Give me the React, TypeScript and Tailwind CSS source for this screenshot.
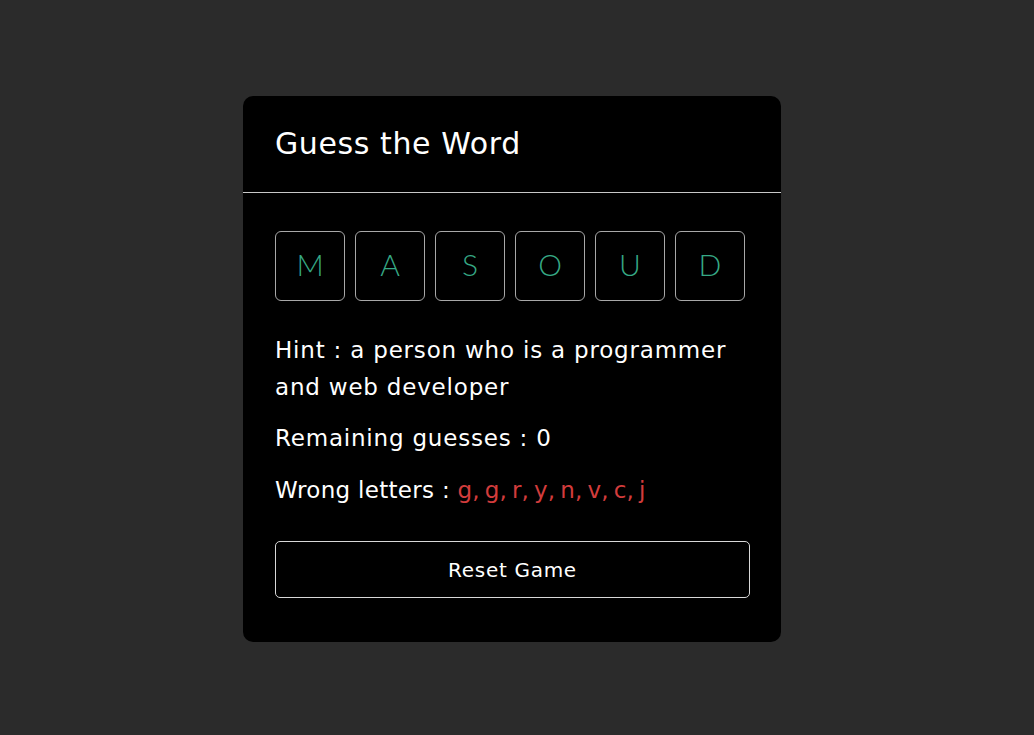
import React from "react";

const letters = ["M", "A", "S", "O", "U", "D"];
const wrong = ["g", "g", "r", "y", "n", "v", "c", "j"];

export default function App() {
  return (
    <div
      className="min-h-screen w-full bg-[#2b2b2b] flex items-center justify-center pr-[10px]"
      style={{ fontFamily: "'DejaVu Sans', 'Noto Sans', sans-serif" }}
    >
      <div className="w-[538px] bg-black rounded-[10px] text-white mt-[3px]">
        <div className="h-[97px] px-8 flex items-center border-b border-[#c8c8c8]">
          <h1 className="text-[30px] tracking-[0.6px] font-normal leading-none -mt-[1px]">Guess the Word</h1>
        </div>
        <div className="pl-8 pr-[31px] pt-[38px] pb-[44px]">
          <div className="flex gap-[10px]">
            {letters.map((l, i) => (
              <div
                key={i}
                className="w-[70px] h-[70px] border border-[#a8a8a8] rounded-[6px] flex items-center justify-center pb-[3px] text-[30px] font-light text-[#36a985] font-['Lato',sans-serif]"
              >
                {l}
              </div>
            ))}
          </div>
          <p className="mt-[31px] text-[23px] tracking-[0.8px] leading-[37px]">
            Hint : a person who is a programmer and web developer
          </p>
          <p className="mt-[14px] text-[23px] tracking-[0.8px] leading-[37px]">Remaining guesses : 0</p>
          <p className="mt-[15px] text-[23px] leading-[37px]">
            <span className="tracking-[0.3px]">Wrong letters : </span>
            <span className="text-[#d23c3c] [word-spacing:-2px]">{wrong.join(", ")}</span>
          </p>
          <button className="mt-[32px] w-full h-[57px] border border-[#d8d8d8] rounded-[5px] text-[20px] tracking-[0.7px] text-white bg-black">
            Reset Game
          </button>
        </div>
      </div>
    </div>
  );
}
